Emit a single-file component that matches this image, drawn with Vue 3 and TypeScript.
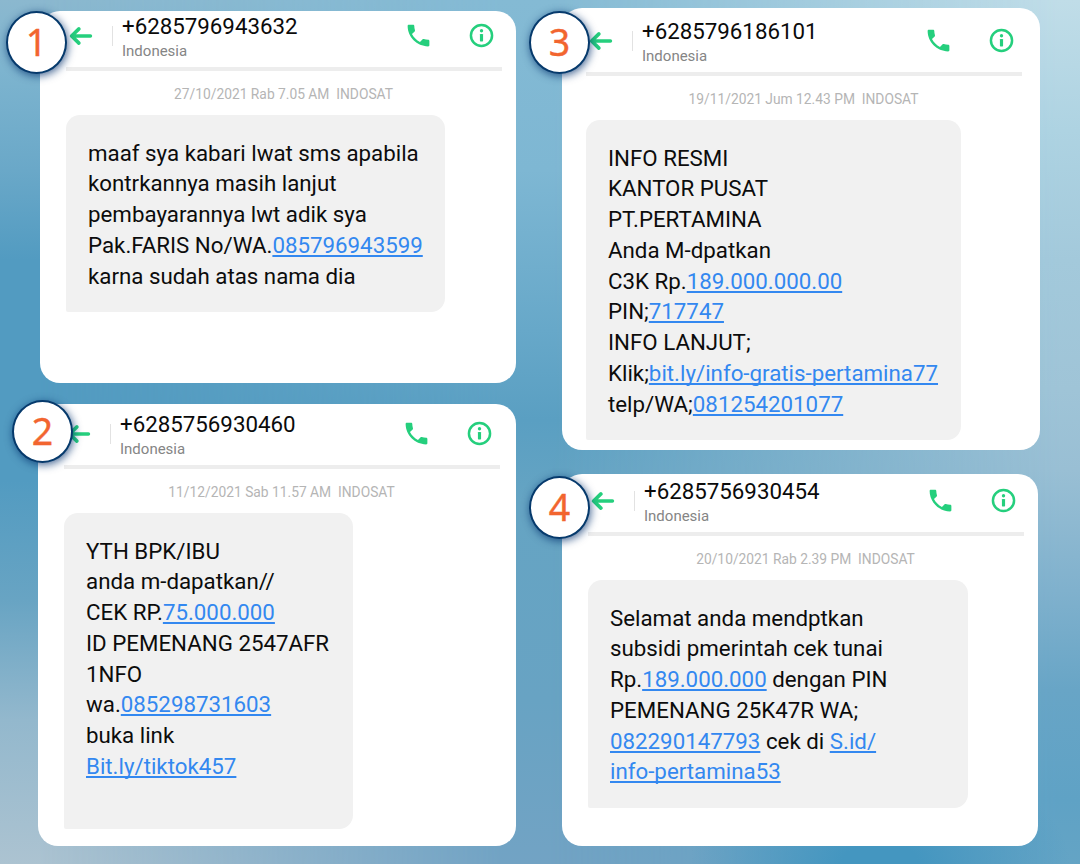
<script setup lang="ts">
interface Segment {
  text: string
  link?: boolean
}

interface Conversation {
  id: number
  phone: string
  country: string
  stamp: string
  lines: Segment[][]
}

const t = (text: string): Segment => ({ text })
const a = (text: string): Segment => ({ text, link: true })

const columns: Conversation[][] = [
  [
    {
      id: 1,
      phone: '+6285796943632',
      country: 'Indonesia',
      stamp: '27/10/2021 Rab 7.05 AM  INDOSAT',
      lines: [
        [t('maaf sya kabari lwat sms apabila')],
        [t('kontrkannya masih lanjut')],
        [t('pembayarannya lwt adik sya')],
        [t('Pak.FARIS No/WA.'), a('085796943599')],
        [t('karna sudah atas nama dia')],
      ],
    },
    {
      id: 2,
      phone: '+6285756930460',
      country: 'Indonesia',
      stamp: '11/12/2021 Sab 11.57 AM  INDOSAT',
      lines: [
        [t('YTH BPK/IBU')],
        [t('anda m-dapatkan//')],
        [t('CEK RP.'), a('75.000.000')],
        [t('ID PEMENANG 2547AFR')],
        [t('1NFO')],
        [t('wa.'), a('085298731603')],
        [t('buka link')],
        [a('Bit.ly/tiktok457')],
      ],
    },
  ],
  [
    {
      id: 3,
      phone: '+6285796186101',
      country: 'Indonesia',
      stamp: '19/11/2021 Jum 12.43 PM  INDOSAT',
      lines: [
        [t('INFO RESMI')],
        [t('KANTOR PUSAT')],
        [t('PT.PERTAMINA')],
        [t('Anda M-dpatkan')],
        [t('C3K Rp.'), a('189.000.000.00')],
        [t('PIN;'), a('717747')],
        [t('INFO LANJUT;')],
        [t('Klik;'), a('bit.ly/info-gratis-pertamina77')],
        [t('telp/WA;'), a('081254201077')],
      ],
    },
    {
      id: 4,
      phone: '+6285756930454',
      country: 'Indonesia',
      stamp: '20/10/2021 Rab 2.39 PM  INDOSAT',
      lines: [
        [t('Selamat anda mendptkan')],
        [t('subsidi pmerintah cek tunai')],
        [t('Rp.'), a('189.000.000'), t(' dengan PIN')],
        [t('PEMENANG 25K47R WA;')],
        [a('082290147793'), t(' cek di '), a('S.id/')],
        [a('info-pertamina53')],
      ],
    },
  ],
]
</script>

<template>
  <main class="board">
    <div class="wash wash-center"></div>
    <div class="wash wash-right"></div>
    <div class="wash wash-glow"></div>
    <div v-for="(column, i) in columns" :key="i" class="column">
      <article v-for="c in column" :key="c.id" class="card" :class="`card-${c.id}`">
        <span class="badge">{{ c.id }}</span>
        <header class="head">
          <svg class="back" viewBox="0 0 24 22">
            <path d="M21.4 11H3.6M9.9 3.9L2.6 11l7.3 7.1" />
          </svg>
          <i class="divider"></i>
          <div class="who">
            <div class="phone">{{ c.phone }}</div>
            <div class="country">{{ c.country }}</div>
          </div>
          <svg class="call" viewBox="0 0 24 24">
            <path d="M6.62 10.79c1.44 2.83 3.76 5.14 6.59 6.59l2.2-2.2c.27-.27.67-.36 1.02-.24 1.12.37 2.33.57 3.57.57.55 0 1 .45 1 1V20c0 .55-.45 1-1 1C10.61 21 3 13.39 3 4c0-.55.45-1 1-1h3.5c.55 0 1 .45 1 1 0 1.25.2 2.45.57 3.57.11.35.03.74-.25 1.02l-2.2 2.2z" />
          </svg>
          <svg class="info" viewBox="0 0 24 24">
            <circle class="ring" cx="12" cy="12" r="9.4" />
            <circle class="dot" cx="12" cy="7.8" r="1.5" />
            <rect class="dot" x="10.6" y="10.6" width="2.8" height="6.7" rx="0.6" />
          </svg>
        </header>
        <div class="stamp">{{ c.stamp }}</div>
        <div class="bubble">
          <p v-for="(line, n) in c.lines" :key="n" class="line"><template v-for="(s, k) in line" :key="k"><a v-if="s.link" class="link">{{ s.text }}</a><span v-else>{{ s.text }}</span></template></p>
        </div>
      </article>
    </div>
  </main>
</template>

<style>
body {
  margin: 0;
}
</style>

<style scoped>
.board {
  position: relative;
  box-sizing: border-box;
  display: flex;
  gap: 46px;
  width: 1080px;
  height: 864px;
  padding: 8px 40px 0 38px;
  overflow: hidden;
  font-family: Roboto, 'Liberation Sans', sans-serif;
  background: linear-gradient(180deg, #8bb8cf 0, #7db4cf 70px, #6aa8c8 170px, #529bc1 260px, #529bc1 480px, #68a4c3 600px, #93b8cd 720px, #acc3d1 864px);
}

.wash {
  position: absolute;
  inset: 0;
}

.wash-center {
  background: linear-gradient(180deg, #84bad4 0, #7eb7d3 170px, #67a8c9 330px, #5a9fc2 420px, #65a4c3 500px, #68a3c3 700px, #72a3c4 864px);
  mask-image: linear-gradient(90deg, transparent 40px, #000 500px);
}

.wash-right {
  background: linear-gradient(180deg, #c0dde8 0, #aed3e2 130px, #a3c9db 260px, #9fc4d7 390px, #99bfd4 470px, #80b1cd 590px, #68a5c6 690px, #5fa2c5 800px, #64a4c5 864px);
  mask-image: linear-gradient(90deg, transparent 550px, #000 1060px);
}

.wash-glow {
  background: radial-gradient(ellipse 190px 110px at 880px 864px, #4496c0 20%, rgba(68, 150, 192, 0) 100%);
}

.column {
  position: relative;
  display: flex;
  flex-direction: column;
  width: 478px;
}

.card {
  position: relative;
  box-sizing: border-box;
  border-radius: 20px;
  background: #fff;
}

.card-1 {
  width: 476px;
  height: 372px;
  margin: 3px 0 21px 2px;
  padding: 0 0 0 26px;
  --bubble-w: 379px;
  --bubble-h: 197px;
  --badge-x: -34px;
  --badge-y: 0px;
}

.card-2 {
  height: 442px;
  padding: 5px 0 0 26px;
  --bubble-w: 288.5px;
  --bubble-h: 315.5px;
  --badge-x: -26px;
  --badge-y: -4px;
}

.card-3 {
  height: 442px;
  margin-bottom: 24px;
  padding: 8px 0 0 24px;
  --bubble-w: 375px;
  --bubble-h: 320px;
  --badge-x: -33px;
  --badge-y: 3px;
}

.card-4 {
  width: 476px;
  height: 372px;
  padding: 2px 0 0 26px;
  --bubble-w: 380px;
  --bubble-h: 228px;
  --badge-x: -33px;
  --badge-y: 2px;
}

.badge {
  position: absolute;
  z-index: 1;
  left: var(--badge-x);
  top: var(--badge-y);
  box-sizing: border-box;
  width: 61px;
  height: 63px;
  border: 2px solid #063a6c;
  border-radius: 50%;
  background: #fff;
  box-shadow: 1px 2px 8px rgba(6, 50, 110, 0.75);
  color: #f2652f;
  font: 37.5px/58px 'Noto Sans', 'Open Sans', sans-serif;
  -webkit-text-stroke: 0.4px #f2652f;
  text-align: center;
}

.head {
  display: flex;
  align-items: flex-start;
  box-sizing: border-box;
  width: 435.5px;
  height: 60px;
  border-bottom: 4px solid #ededed;
}

.back {
  width: 24px;
  height: 22px;
  margin: 13.5px 0 0 3px;
  fill: none;
  stroke: #25cf7d;
  stroke-width: 3.6;
  stroke-linecap: round;
  stroke-linejoin: round;
}

.divider {
  width: 1px;
  height: 20px;
  margin: 15px 0 0 19px;
  background: #e2e2e2;
}

.who {
  flex: 1;
  padding-left: 9px;
}

.phone {
  color: #0b0b0b;
  font-size: 22.3px;
  line-height: 30px;
}

.country {
  color: #858585;
  font-size: 15px;
  line-height: 21px;
}

.call {
  width: 29px;
  height: 29px;
  margin: 10px 35.5px 0 0;
  fill: #25cf7d;
}

.info {
  width: 27px;
  height: 27px;
  margin: 11px 6.5px 0 0;
}

.ring {
  fill: none;
  stroke: #25cf7d;
  stroke-width: 2.2;
}

.dot {
  fill: #25cf7d;
}

.stamp {
  width: 435px;
  height: 44px;
  color: #b5b5b5;
  font-size: 13.8px;
  line-height: 46px;
  text-align: center;
  white-space: pre;
}

.bubble {
  box-sizing: border-box;
  width: var(--bubble-w);
  height: var(--bubble-h);
  padding: 22.5px 0 0 22px;
  border-radius: 14px 14px 14px 2px;
  background: #f1f1f1;
  color: #0c0c0c;
  font-size: 22.3px;
  line-height: 30.75px;
  white-space: pre;
}

.line {
  margin: 0;
}

.link {
  color: #3388f0;
  text-decoration: underline;
  text-decoration-thickness: 1.5px;
  text-underline-offset: 1.5px;
  text-decoration-skip-ink: none;
}
</style>
